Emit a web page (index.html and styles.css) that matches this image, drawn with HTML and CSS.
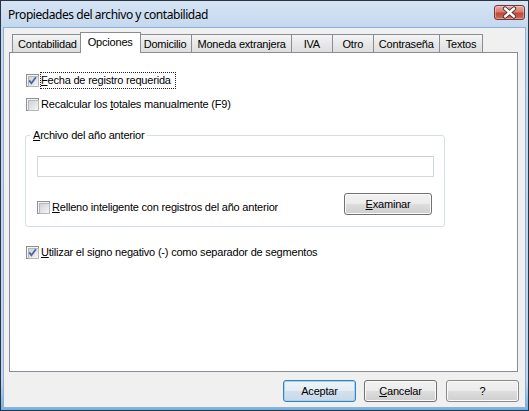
FILE: index.html
```html
<!DOCTYPE html>
<html lang="es">
<head>
<meta charset="utf-8">
<title>Propiedades del archivo y contabilidad</title>
<link rel="stylesheet" href="styles.css">
</head>
<body>
<div class="window">
  <div class="titlebar">
    <span class="title">Propiedades del archivo y contabilidad</span>
    <button class="close" type="button" aria-label="Cerrar">
      <svg width="31" height="15" viewBox="0 0 31 15">
        <path d="M11 3.5 L20 11.5 M20 3.5 L11 11.5" stroke="#4a2a2a" stroke-width="4.2" stroke-linecap="round" fill="none"/>
        <path d="M11 3.5 L20 11.5 M20 3.5 L11 11.5" stroke="#ffffff" stroke-width="2.4" stroke-linecap="round" fill="none"/>
      </svg>
    </button>
  </div>
  <div class="client">
    <div class="tabs">
      <div class="tab">Contabilidad</div>
      <div class="tab active">Opciones</div>
      <div class="tab">Domicilio</div>
      <div class="tab">Moneda extranjera</div>
      <div class="tab">IVA</div>
      <div class="tab">Otro</div>
      <div class="tab">Contraseña</div>
      <div class="tab">Textos</div>
    </div>
    <div class="panel">
      <label class="check">
        <span class="cb"><svg class="tick" width="13" height="13" viewBox="0 0 13 13"><path d="M3.2 6.4 L5.4 9.2 L9.9 3.2" stroke="#4b64a3" stroke-width="1.8" fill="none"/></svg></span>
        <span class="label focus"><u>F</u>echa de registro requerida</span>
      </label>
      <label class="check gap">
        <span class="cb"></span>
        <span class="label">Recalcular los <u>t</u>otales manualmente (F9)</span>
      </label>
      <fieldset class="group">
        <legend><u>A</u>rchivo del año anterior</legend>
        <input class="path" type="text" value="">
        <div class="group-row">
          <label class="check">
            <span class="cb"></span>
            <span class="label"><u>R</u>elleno inteligente con registros del año anterior</span>
          </label>
          <button class="btn browse" type="button"><u>E</u>xaminar</button>
        </div>
      </fieldset>
      <label class="check after-group">
        <span class="cb"><svg class="tick" width="13" height="13" viewBox="0 0 13 13"><path d="M3.2 6.4 L5.4 9.2 L9.9 3.2" stroke="#4b64a3" stroke-width="1.8" fill="none"/></svg></span>
        <span class="label"><u>U</u>tilizar el signo negativo (-) como separador de segmentos</span>
      </label>
    </div>
    <div class="actions">
      <button class="btn default" type="button">Aceptar</button>
      <button class="btn" type="button"><u>C</u>ancelar</button>
      <button class="btn" type="button">?</button>
    </div>
  </div>
</div>
</body>
</html>
```
FILE: styles.css
```css
* {
  box-sizing: border-box;
}

html,
body {
  margin: 0;
  padding: 0;
}

body {
  width: 529px;
  height: 411px;
  overflow: hidden;
  background: #ffffff;
  font-family: "Liberation Sans", Arial, sans-serif;
  font-size: 11px;
  letter-spacing: -0.2px;
  color: #000000;
}

/* Window frame */
.window {
  width: 529px;
  height: 411px;
  display: flex;
  flex-direction: column;
  border: 1px solid #2a3342;
  background: linear-gradient(to bottom, #d6e4f4 0, #c4d8ef 26px, #bfd4ee 380px, #6fb3e3 100%);
}

.titlebar {
  height: 26px;
  flex: none;
  display: flex;
  align-items: center;
  padding-left: 7px;
  padding-right: 3px;
}

.title {
  font-family: "Noto Sans", "Open Sans", sans-serif;
  font-size: 12px;
  letter-spacing: -0.45px;
  color: #000000;
}

.close {
  margin-left: auto;
  align-self: flex-start;
  margin-top: 4px;
  width: 31px;
  height: 15px;
  padding: 0;
  border: 1px solid #6b3a38;
  border-radius: 3px;
  background: linear-gradient(to bottom, #e9a99f 0%, #d77c70 45%, #c2473a 55%, #cf6a55 100%);
  box-shadow: inset 0 0 0 1px rgba(255, 255, 255, 0.35);
  display: flex;
  align-items: center;
  justify-content: center;
}

.close svg {
  display: block;
  margin: -1px;
}

/* Client area */
.client {
  flex: 1;
  margin: 0 2px 2px 2px;
  border: 1px solid #8fb0d6;
  background: #f0f0f0;
  display: flex;
  flex-direction: column;
  padding: 4px 7px 5px 5px;
}

.tabs {
  height: 20px;
  flex: none;
  display: flex;
  align-items: flex-end;
  padding-left: 3px;
  position: relative;
  z-index: 1;
}

.tab {
  height: 18px;
  min-width: 42px;
  padding: 1px 5px 0 5px;
  margin-left: -1px;
  line-height: 16px;
  text-align: center;
  white-space: nowrap;
  border: 1px solid #898c95;
  border-bottom: none;
  background: linear-gradient(to bottom, #f5f5f5 0%, #e8e8e8 50%, #dedede 100%);
}

.tab:first-child {
  margin-left: 0;
}

.tab:last-child {
  padding: 1px 6px 0 6px;
}

.tab.active {
  height: 21px;
  margin-left: -3px;
  margin-right: -2px;
  margin-bottom: -1px;
  padding: 1px 7px 0 7px;
  background: #ffffff;
  position: relative;
  z-index: 2;
}

.panel {
  flex: 1;
  border: 1px solid #898c95;
  background: #ffffff;
  padding: 19px 16px 0 16px;
  display: flex;
  flex-direction: column;
  align-items: flex-start;
}

/* Check boxes */
.check {
  height: 17px;
  display: flex;
  align-items: center;
  gap: 1px;
}

.check.gap {
  margin-top: 7px;
}

.check.after-group {
  margin-top: 17px;
}

.cb {
  width: 13px;
  height: 13px;
  flex: none;
  position: relative;
  border: 1px solid #8e8f8f;
  background: #f4f4f4;
  padding: 1px;
}

.cb::before {
  content: "";
  display: block;
  width: 9px;
  height: 9px;
  border: 1px solid #b4b8bd;
  background: linear-gradient(135deg, #cfd2d7 0%, #e6e7e9 60%, #f6f6f6 100%);
}

.cb .tick {
  position: absolute;
  left: -1px;
  top: -1px;
}

.label {
  height: 17px;
  line-height: 15px;
  padding: 0 1px 0 0;
  border: 1px dotted transparent;
  white-space: nowrap;
}

.label.focus {
  padding-right: 4px;
  border-color: #202020;
}

/* Group box */
.group {
  width: 420px;
  margin: 16px 0 0 -1px;
  padding: 14px 10px 10px 11px;
  border: 1px solid #d5dfe5;
  border-radius: 3px;
  min-width: 0;
}

.group legend {
  margin-left: -7px;
  padding: 0 3px;
  line-height: 13px;
}

.path {
  display: block;
  width: 397px;
  height: 21px;
  margin: 0;
  border: 1px solid #d3d8de;
  border-top-color: #c9ced5;
  background: #ffffff;
  font: inherit;
}

.group-row {
  margin-top: 16px;
  display: flex;
  align-items: flex-end;
  justify-content: space-between;
}

/* Push buttons */
.btn {
  width: 73px;
  height: 22px;
  padding: 0;
  margin: 0;
  font-family: "Liberation Sans", Arial, sans-serif;
  font-size: 11px;
  letter-spacing: -0.2px;
  color: #000000;
  border: 1px solid #707070;
  border-radius: 3px;
  background: linear-gradient(to bottom, #f2f2f2 0%, #ebebeb 50%, #dddddd 51%, #cfcfcf 100%);
  box-shadow: inset 0 0 0 1px #fbfbfb;
}

.btn.browse {
  width: 88px;
  margin: 0 2px 1px 0;
}

.btn.default {
  border-color: #3c7fb1;
  background: linear-gradient(to bottom, #eef4f9 0%, #e3ecf4 50%, #d3e1ed 51%, #c7d8e8 100%);
  box-shadow: inset 0 0 0 1px #9ed6f5;
}

.actions {
  flex: none;
  margin-top: 8px;
  margin-right: -1px;
  display: flex;
  justify-content: flex-end;
  gap: 8px;
}

.actions .btn:last-child {
  margin-left: 1px;
  border-color: #8a8a8a;
}
```
